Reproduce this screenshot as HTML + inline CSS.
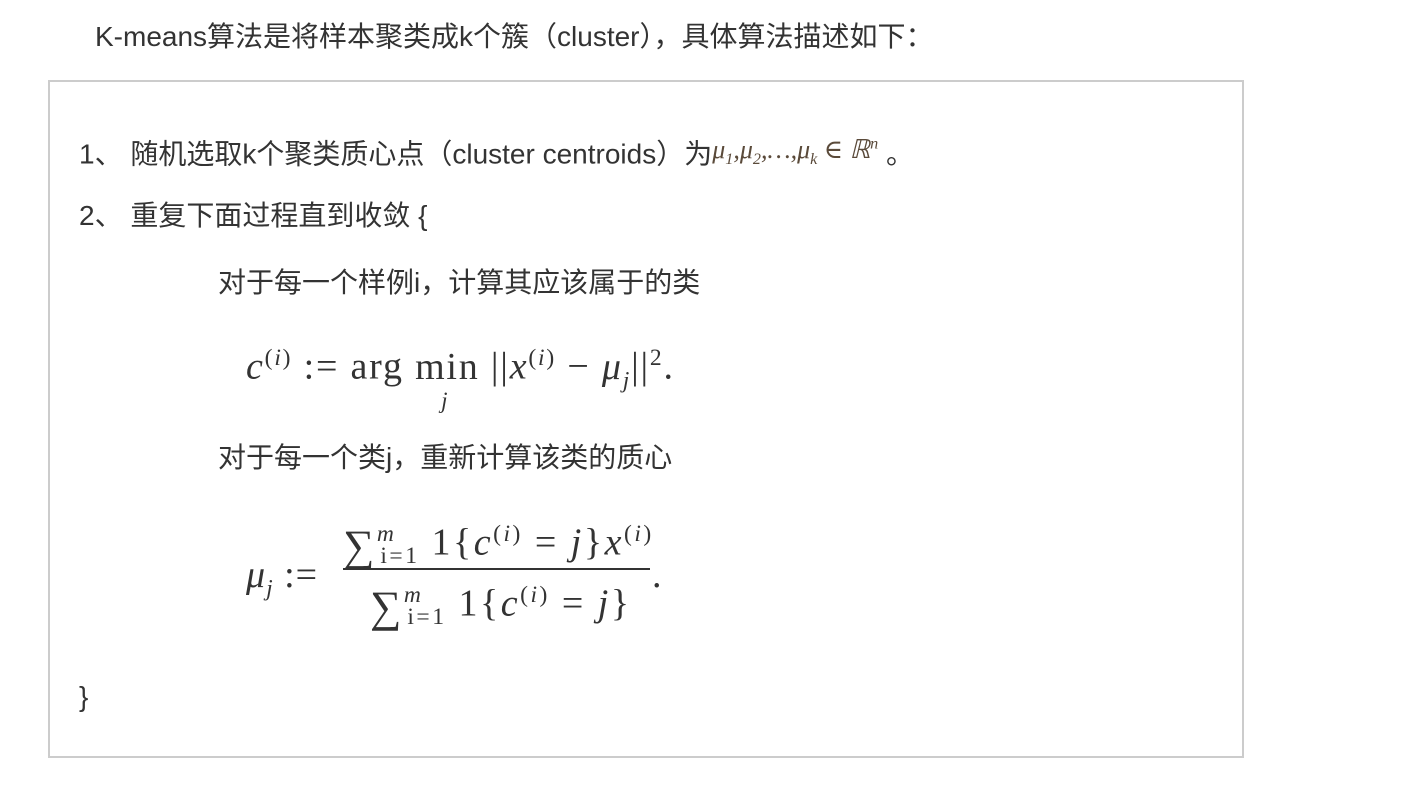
<!DOCTYPE html>
<html><head><meta charset="utf-8"><style>
body{margin:0;width:1418px;height:788px;background:#fff;position:relative;overflow:hidden;font-family:"Liberation Sans","Noto Sans CJK SC",sans-serif;color:#333;}
.t{position:absolute;font-size:28px;line-height:34px;white-space:nowrap;}
.box{position:absolute;left:48px;top:80px;width:1192px;height:674px;border:2px solid #ccc;}
.m{position:absolute;font-family:"Liberation Serif","DejaVu Serif",serif;color:#333;white-space:nowrap;}
.i{font-style:italic}
sup,sub{font-size:62%;}
.big{font-size:44px;line-height:30px;vertical-align:-6px}
</style></head><body>
<div class="t" style="left:95px;top:20px">K-means算法是将样本聚类成k个簇（cluster），具体算法描述如下：</div>
<div class="box"></div>
<div class="t" style="left:79px;top:133px">1、 随机选取k个聚类质心点（cluster centroids）为<span class="m i" style="position:relative;font-size:26px;color:#5a4a3a;top:-6px;letter-spacing:0">μ<sub>1</sub>,μ<sub>2</sub>,…,μ<sub>k</sub> ∈ ℝ<sup>n</sup></span> 。</div>
<div class="t" style="left:79px;top:199px">2、 重复下面过程直到收敛 {</div>
<div class="t" style="left:218px;top:266px">对于每一个样例i，计算其应该属于的类</div>
<div class="m" style="left:246px;top:336px;font-size:38px;line-height:44px;letter-spacing:1.8px"><span class="i">c</span><sup>(<span class="i">i</span>)</sup> := arg <span style="position:relative;display:inline-block">min<span class="i" style="position:absolute;left:26px;top:34px;font-size:23px">j</span></span> ||<span class="i">x</span><sup>(<span class="i">i</span>)</sup> − <span class="i">μ<sub>j</sub></span>||<sup>2</sup>.</div>
<div class="t" style="left:218px;top:441px">对于每一个类j，重新计算该类的质心</div>
<div class="m" style="left:246px;top:553px;font-size:38px;line-height:44px;letter-spacing:1px"><span class="i">μ<sub>j</sub></span> :=</div>
<div class="m" style="left:343px;top:512px;font-size:38px;line-height:44px;letter-spacing:2.5px"><span class="big">∑</span><sup class="i">m</sup><sub style="margin-left:-16px">i=1</sub> 1{<span class="i">c</span><sup>(<span class="i">i</span>)</sup> = <span class="i">j</span>}<span class="i">x</span><sup>(<span class="i">i</span>)</sup></div>
<div style="position:absolute;left:343px;top:568px;width:307px;height:2px;background:#333"></div>
<div class="m" style="left:370px;top:573px;font-size:38px;line-height:44px;letter-spacing:2.5px"><span class="big">∑</span><sup class="i">m</sup><sub style="margin-left:-16px">i=1</sub> 1{<span class="i">c</span><sup>(<span class="i">i</span>)</sup> = <span class="i">j</span>}</div>
<div class="m" style="left:652px;top:553px;font-size:38px;line-height:44px">.</div>
<div class="t" style="left:79px;top:680px">}</div>
</body></html>
